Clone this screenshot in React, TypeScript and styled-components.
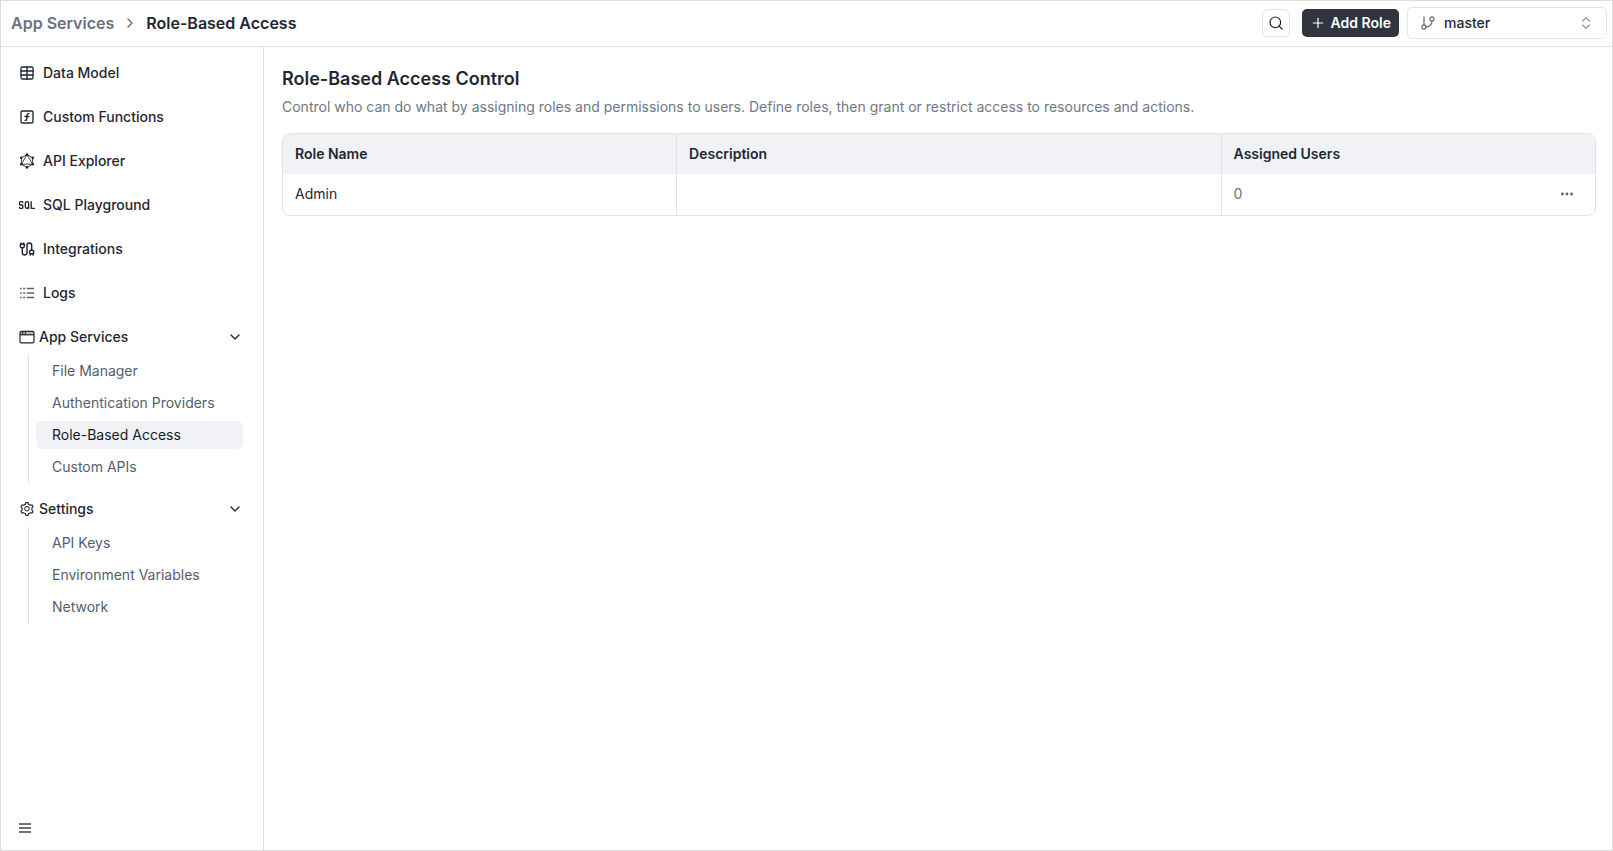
import React from "react";
import styled, { createGlobalStyle } from "styled-components";
import {
  Cable,
  ChevronDown,
  ChevronRight,
  ChevronsUpDown,
  GitBranch,
  Plus,
  Search,
  SquareFunction,
  Table as TableIcon,
} from "lucide-react";
import { TbSql } from "react-icons/tb";
import { AiOutlineSetting } from "react-icons/ai";

const GlobalStyle = createGlobalStyle`
  * { box-sizing: border-box; }
  body {
    margin: 0;
    background: #ffffff;
    color: #1f2733;
    font-family: Inter, "Liberation Sans", sans-serif;
    font-size: 14px;
    line-height: 20px;
  }
  button, select { font: inherit; color: inherit; margin: 0; }
  button { cursor: pointer; }
  a { color: inherit; text-decoration: none; }
`;

const Shell = styled.div`
  display: flex;
  flex-direction: column;
  min-height: 100vh;
  border: 1px solid #dcdcde;
`;

const TopBar = styled.header`
  display: flex;
  align-items: center;
  justify-content: space-between;
  height: 46px;
  padding: 0 5px 2px 10px;
  border-bottom: 1px solid #e0e0e3;
`;

const Breadcrumb = styled.nav`
  display: flex;
  align-items: center;
  gap: 8px;
  font-size: 16px;
  line-height: 24px;
  font-weight: 600;
  svg { color: #6b6f78; }
`;

const CrumbLink = styled.a`
  color: #6b7280;
`;

const Actions = styled.div`
  display: flex;
  align-items: center;
`;

const IconButton = styled.button`
  display: grid;
  place-items: center;
  width: 28px;
  height: 28px;
  margin-right: 12px;
  padding: 0;
  border: 1px solid #e4e5ea;
  border-radius: 6px;
  background: #ffffff;
`;

const PrimaryButton = styled.button`
  display: flex;
  align-items: center;
  gap: 5px;
  height: 28px;
  margin-right: 8px;
  padding: 0 8px;
  border: 0;
  border-radius: 5px;
  background: #2f343e;
  color: #ffffff;
  font-weight: 600;
`;

const BranchField = styled.label`
  display: grid;
  grid-template-columns: 16px 1fr 16px;
  align-items: center;
  width: 200px;
  height: 32px;
  padding: 0 12px;
  border: 1px solid #e2e4e8;
  border-radius: 5px;
  color: #71757e;
  > :last-child { color: #8d9098; }
`;

const BranchSelect = styled.select`
  appearance: none;
  padding: 0 0 0 8px;
  border: 0;
  background: transparent;
  color: #1f2733;
  font-weight: 500;
`;

const Body = styled.div`
  display: flex;
  flex: 1;
`;

const Sidebar = styled.aside`
  display: flex;
  flex-direction: column;
  justify-content: space-between;
  flex: 0 0 263px;
  padding: 8px 20px 17px 18px;
  border-right: 1px solid #e0e0e3;
`;

const NavList = styled.nav`
  display: flex;
  flex-direction: column;
  gap: 8px;
`;

const NavLink = styled.a`
  display: flex;
  align-items: center;
  gap: 8px;
  height: 36px;
  font-weight: 500;
`;

const IconSlot = styled.span`
  display: flex;
  align-items: center;
  justify-content: center;
  width: 16px;
  height: 16px;
  svg { flex: none; }
`;

const SqlIcon = styled(TbSql)`
  stroke-width: 1.6;
`;

const GroupButton = styled.button`
  display: flex;
  align-items: center;
  gap: 4px;
  width: 100%;
  height: 36px;
  padding: 0;
  border: 0;
  background: transparent;
  font-weight: 500;
  > :last-child { margin: 0 0 0 auto; }
`;

const SubList = styled.div`
  display: flex;
  flex-direction: column;
  gap: 4px;
  margin-left: 9px;
  padding: 2px 0 2px 7px;
  border-left: 1px solid #dfe0e4;
`;

const SubLink = styled.a<{ $active?: boolean }>`
  height: 28px;
  padding: 0 16px;
  border-radius: 6px;
  line-height: 28px;
  background: ${(p) => (p.$active ? "#f0f2f5" : "transparent")};
  color: ${(p) => (p.$active ? "#151b28" : "#555e6b")};
`;

const MenuButton = styled.button`
  align-self: flex-start;
  display: flex;
  padding: 0;
  border: 0;
  background: transparent;
  color: #6f7074;
`;

const Main = styled.main`
  flex: 1;
  min-width: 0;
  padding: 20px 16px 20px 18px;
`;

const Title = styled.h1`
  margin: 0;
  font-size: 18px;
  line-height: 24px;
  font-weight: 600;
`;

const Intro = styled.p`
  margin: 6px 0 16px;
  color: #717783;
`;

const TableFrame = styled.div`
  border: 1px solid #e1e3e8;
  border-radius: 8px;
  overflow: hidden;
`;

const RoleTable = styled.table`
  width: 100%;
  border-collapse: collapse;
  table-layout: fixed;
  th, td {
    padding: 0 12px;
    text-align: left;
    border-right: 1px solid #e1e3e8;
  }
  th:last-child, td:last-child { border-right: 0; }
  th { height: 40px; background: #f0f2f5; font-weight: 600; }
  td { height: 41px; padding-bottom: 2px; }
`;

const Column = styled.col<{ $share: string }>`
  width: ${(p) => p.$share};
`;

const UsersCell = styled.div`
  display: flex;
  align-items: center;
  justify-content: space-between;
  padding-right: 10px;
  color: #6b7280;
`;

const RowMenu = styled.button`
  display: flex;
  padding: 0;
  border: 0;
  background: transparent;
  color: #5b5f68;
`;

const GraphIcon = () => (
  <svg width="16" height="16" viewBox="0 0 16 16" fill="none" stroke="currentColor" strokeWidth="0.9" aria-hidden="true">
    <path d="M8 1.6 13.6 4.8v6.4L8 14.4 2.4 11.2V4.8z M8 1.6 2.4 11.2h11.2z" />
    <g fill="currentColor" stroke="none">
      <circle cx="8" cy="1.6" r="1.3" />
      <circle cx="13.8" cy="4.8" r="1.3" />
      <circle cx="13.8" cy="11.2" r="1.3" />
      <circle cx="8" cy="14.4" r="1.3" />
      <circle cx="2.2" cy="11.2" r="1.3" />
      <circle cx="2.2" cy="4.8" r="1.3" />
    </g>
  </svg>
);

const LogsIcon = () => (
  <svg width="16" height="16" viewBox="0 0 16 16" fill="none" stroke="#5a5f68" strokeWidth="1.5" aria-hidden="true">
    <path d="M1 3.5h1.6M4.2 3.5h2M7.8 3.5H15M1 8h1.6M4.2 8h2M7.8 8H15M1 12.5h1.6M4.2 12.5h2M7.8 12.5H15" />
  </svg>
);

const WindowIcon = () => (
  <svg width="16" height="16" viewBox="0 0 16 16" fill="none" stroke="currentColor" strokeWidth="1.2" aria-hidden="true">
    <path d="M1 3h14v3H1z" fill="#b4b7bd" stroke="none" />
    <rect x="1" y="2.4" width="14" height="11.4" rx="1.4" />
    <path d="M1 5.8h14" />
    <path d="M3.6 2.4v3.4M6.4 2.4v3.4" strokeWidth="1" />
  </svg>
);

const BarsIcon = () => (
  <svg width="12" height="10" viewBox="0 0 12 10" fill="currentColor" aria-hidden="true">
    <path d="M0 0h12v2H0zM0 4h12v2H0zM0 8h12v2H0z" />
  </svg>
);

const DotsIcon = () => (
  <svg width="12" height="12" viewBox="0 0 12 12" fill="currentColor" aria-hidden="true">
    <circle cx="1.4" cy="6" r="1.4" />
    <circle cx="6" cy="6" r="1.4" />
    <circle cx="10.6" cy="6" r="1.4" />
  </svg>
);

const links = [
  { label: "Data Model", icon: <TableIcon size={16} /> },
  { label: "Custom Functions", icon: <SquareFunction size={16} /> },
  { label: "API Explorer", icon: <GraphIcon /> },
  { label: "SQL Playground", icon: <SqlIcon size={20} /> },
  { label: "Integrations", icon: <Cable size={16} strokeWidth={2.2} /> },
  { label: "Logs", icon: <LogsIcon /> },
];

const groups = [
  {
    label: "App Services",
    icon: <WindowIcon />,
    items: ["File Manager", "Authentication Providers", "Role-Based Access", "Custom APIs"],
  },
  {
    label: "Settings",
    icon: <AiOutlineSetting size={16} />,
    items: ["API Keys", "Environment Variables", "Network"],
  },
];

const current = "Role-Based Access";

export default function App() {
  return (
    <Shell>
      <GlobalStyle />
      <TopBar>
        <Breadcrumb aria-label="Breadcrumb">
          <CrumbLink href="#app-services">App Services</CrumbLink>
          <ChevronRight size={16} />
          <span>{current}</span>
        </Breadcrumb>
        <Actions>
          <IconButton aria-label="Search">
            <Search size={16} strokeWidth={1.8} />
          </IconButton>
          <PrimaryButton>
            <Plus size={16} strokeWidth={1.8} />
            Add Role
          </PrimaryButton>
          <BranchField>
            <GitBranch size={16} />
            <BranchSelect aria-label="Branch" defaultValue="master">
              <option value="master">master</option>
            </BranchSelect>
            <ChevronsUpDown size={16} strokeWidth={1.8} />
          </BranchField>
        </Actions>
      </TopBar>
      <Body>
        <Sidebar>
          <NavList aria-label="Project">
            {links.map((link) => (
              <NavLink key={link.label} href="#">
                <IconSlot>{link.icon}</IconSlot>
                {link.label}
              </NavLink>
            ))}
            {groups.map((group) => (
              <div key={group.label}>
                <GroupButton aria-expanded="true">
                  <IconSlot>{group.icon}</IconSlot>
                  {group.label}
                  <ChevronDown size={16} />
                </GroupButton>
                <SubList>
                  {group.items.map((item) => (
                    <SubLink key={item} href="#" $active={item === current}>
                      {item}
                    </SubLink>
                  ))}
                </SubList>
              </div>
            ))}
          </NavList>
          <MenuButton aria-label="Collapse sidebar">
            <BarsIcon />
          </MenuButton>
        </Sidebar>
        <Main>
          <Title>Role-Based Access Control</Title>
          <Intro>
            Control who can do what by assigning roles and permissions to users. Define roles, then grant or restrict
            access to resources and actions.
          </Intro>
          <TableFrame>
            <RoleTable>
              <colgroup>
                <Column $share="30%" />
                <Column $share="41.5%" />
                <Column $share="28.5%" />
              </colgroup>
              <thead>
                <tr>
                  <th scope="col">Role Name</th>
                  <th scope="col">Description</th>
                  <th scope="col">Assigned Users</th>
                </tr>
              </thead>
              <tbody>
                <tr>
                  <td>Admin</td>
                  <td />
                  <td>
                    <UsersCell>
                      0
                      <RowMenu aria-label="Role options">
                        <DotsIcon />
                      </RowMenu>
                    </UsersCell>
                  </td>
                </tr>
              </tbody>
            </RoleTable>
          </TableFrame>
        </Main>
      </Body>
    </Shell>
  );
}
